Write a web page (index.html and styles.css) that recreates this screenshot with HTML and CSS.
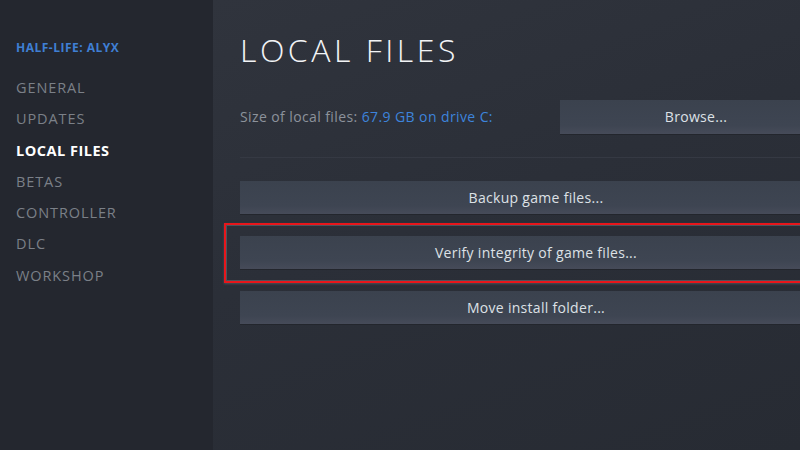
FILE: index.html
```html
<!DOCTYPE html>
<html lang="en">
<head>
<meta charset="utf-8">
<title>Half-Life: Alyx - Local Files</title>
<link rel="stylesheet" href="styles.css">
</head>
<body>
<div class="app">
  <nav class="sidebar">
    <div class="game-title">HALF-LIFE: ALYX</div>
    <ul class="menu">
      <li class="menu-item">GENERAL</li>
      <li class="menu-item">UPDATES</li>
      <li class="menu-item active">LOCAL FILES</li>
      <li class="menu-item">BETAS</li>
      <li class="menu-item">CONTROLLER</li>
      <li class="menu-item">DLC</li>
      <li class="menu-item">WORKSHOP</li>
    </ul>
  </nav>
  <main class="main">
    <div class="content">
      <h1 class="page-title">LOCAL FILES</h1>
      <div class="size-row">
        <div class="size-text">Size of local files: <span class="size-link">67.9 GB on drive C:</span></div>
        <button class="btn btn-browse">Browse...</button>
      </div>
      <div class="separator"></div>
      <div class="actions">
        <button class="btn">Backup game files...</button>
        <div class="highlight-wrap">
          <button class="btn">Verify integrity of game files...</button>
          <div class="highlight"></div>
        </div>
        <button class="btn">Move install folder...</button>
      </div>
    </div>
  </main>
</div>
</body>
</html>
```

FILE: styles.css
```css
html, body {
  margin: 0;
  padding: 0;
  width: 800px;
  height: 450px;
  overflow: hidden;
  background: #262a32;
  font-family: "Open Sans", "Noto Sans", "Liberation Sans", sans-serif;
}

.app {
  display: flex;
  width: 800px;
  height: 450px;
}

.sidebar {
  width: 213px;
  flex: none;
  background: #24272f;
  padding: 40px 0 0 16px;
  box-sizing: border-box;
}

.game-title {
  color: #3f7fd4;
  font-size: 12px;
  font-weight: 700;
  line-height: 16px;
  letter-spacing: 0.5px;
}

.menu {
  list-style: none;
  margin: 16px 0 0 0;
  padding: 0;
}

.menu-item {
  color: #7b8088;
  font-size: 14.5px;
  line-height: 31.3px;
  height: 31.3px;
  letter-spacing: 0.9px;
}

.menu-item.active {
  color: #ffffff;
  font-weight: 700;
  letter-spacing: 0.5px;
}

.main {
  flex: 1;
  overflow: hidden;
  background: linear-gradient(160deg, #30343d 0%, #2b2f38 45%, #272b33 100%);
  padding-left: 27px;
}

.content {
  width: 592px;
  padding-top: 30px;
}

.page-title {
  margin: 0;
  color: #f2f4f6;
  font-size: 32px;
  font-weight: 300;
  line-height: 40px;
  letter-spacing: 3.5px;
}

.size-row {
  display: flex;
  align-items: center;
  justify-content: space-between;
  margin-top: 30px;
  height: 34px;
}

.size-text {
  color: #8c929b;
  font-size: 14px;
  line-height: 20px;
  letter-spacing: 0.4px;
}

.size-link {
  color: #3d84dc;
}

.btn {
  display: block;
  border: none;
  margin: 0;
  padding: 0;
  width: 100%;
  height: 33px;
  background: linear-gradient(180deg, #3b424e 0%, #3e4552 75%, #464b59 100%);
  color: #dde1e6;
  font-family: "Open Sans", "Noto Sans", "Liberation Sans", sans-serif;
  font-size: 14px;
  line-height: 33px;
  letter-spacing: 0.3px;
  text-align: center;
  box-shadow: 0 1px 0 #23262d;
}

.btn-browse {
  width: 272px;
  height: 34px;
  line-height: 34px;
  flex: none;
}

.separator {
  height: 1px;
  background: #353943;
  margin-top: 23px;
}

.actions {
  display: flex;
  flex-direction: column;
  gap: 22px;
  margin-top: 23px;
}

.highlight-wrap {
  position: relative;
}

.highlight {
  position: absolute;
  left: -16px;
  top: -13px;
  right: -30px;
  bottom: -14px;
  border: 2px solid #e8161b;
  box-shadow: inset 0 0 0 1px #4e535c, 0 1px 2px #4a4f58;
  pointer-events: none;
}
```
